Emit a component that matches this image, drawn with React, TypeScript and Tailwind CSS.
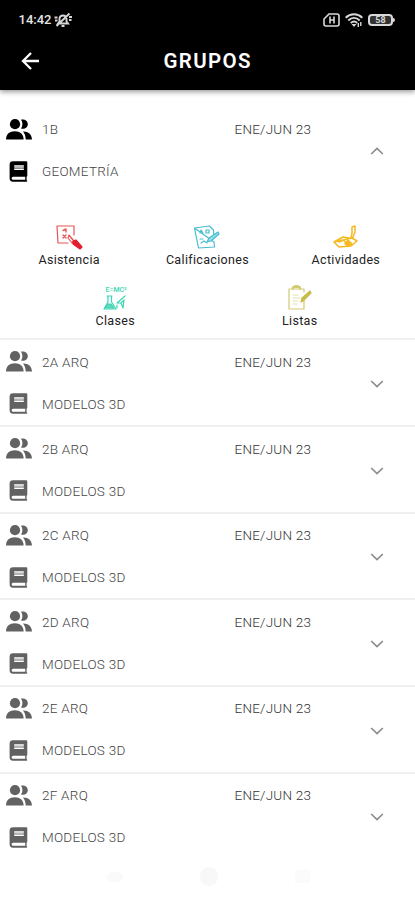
import React from "react";

function People() {
  return (
    <svg className="h-[21px] w-[26px]" viewBox="0 0 26 21" fill="currentColor">
      <circle cx="9" cy="5.2" r="5.1" />
      <path d="M15 .7c3.9-.7 6.8 1.5 6.8 4.6 0 3.2-3.1 5.3-6.8 4.2 1.9-2.6 1.9-6.2 0-8.8Z" />
      <path d="M0 20.4c0-5.4 3.6-8.2 8.8-8.2s8.8 2.8 8.8 8.2Z" />
      <path d="M17 12.4c5.3-.2 8.6 2.6 9 8h-6.3c-.1-3.2-.9-5.9-2.7-8Z" />
    </svg>
  );
}

function Book() {
  return (
    <svg className="ml-[3px] h-[21px] w-[19px]" viewBox="0 0 19 21">
      <path d="M4 .3h13.2q1.1 0 1.1 1.1v13.4q0 .7-.7 1v3.4q.7.2.7.8 0 .7-.9.7H4q-3.4 0-3.4-3.4V3.7Q.6.3 4 .3Z" fill="currentColor" />
      <path d="M5.2 5h9.6M5.2 8.3h9.6" stroke="#fff" strokeWidth="1.5" />
      <path d="M5.2 6.65h9.6" stroke="#bbb" strokeWidth="1.2" />
      <path d="M4.2 15.8h12v3h-12q-1.6 0-1.6-1.5t1.6-1.5Z" fill="#fff" />
    </svg>
  );
}

function Chevron({ up = false }: { up?: boolean }) {
  return (
    <svg className="h-2 w-[14px]" viewBox="0 0 14 8" fill="none" stroke="#8c8c8c" strokeWidth="1.7">
      <path d={up ? "M1.2 7 7 1.4 12.8 7" : "M1.2 1 7 6.6 12.8 1"} />
    </svg>
  );
}

function Group({ name, subject, open = false }: { name: string; subject: string; open?: boolean }) {
  return (
    <div className={`flex h-[86.65px] shrink-0 items-start ${open ? "pt-[11.5px] text-black" : "border-t-2 border-[#f0f0f0] pt-[10.4px] text-[#626262]"}`}>
      <div className="flex w-[234.5px] flex-col pl-[6px]">
        <div className="flex h-[22px] items-center">
          <People />
          <span className="ml-[10px] pt-px text-[13.5px] font-light leading-[21px] tracking-[0.25px] text-[#444]">{name}</span>
        </div>
        <div className="mt-[20px] flex h-[22px] items-center">
          <Book />
          <span className="ml-[14px] pt-px text-[13.5px] font-light leading-[21px] tracking-[0.27px] text-[#444]">{subject}</span>
        </div>
      </div>
      <div className="w-[135.5px] pt-px text-[13.5px] font-light leading-[21px] tracking-[0.22px] text-[#333]">ENE/JUN 23</div>
      <div className={open ? "mt-[29px]" : "mt-[29.2px]"}><Chevron up={open} /></div>
    </div>
  );
}

function Tool({ label, children }: { label: string; children: React.ReactNode }) {
  return (
    <div className="flex flex-1 flex-col items-center">
      <svg className="h-[26px] w-[28px]" viewBox="0 0 28 26" fill="none" strokeLinejoin="round" strokeLinecap="round">{children}</svg>
      <span className="mt-[2px] text-[12.5px] leading-[16px] tracking-[0.34px] text-[#222]">{label}</span>
    </div>
  );
}

const groups = ["2A ARQ", "2B ARQ", "2C ARQ", "2D ARQ", "2E ARQ", "2F ARQ"];

export default function App() {
  return (
    <div className="flex h-[900px] w-full flex-col overflow-hidden bg-white font-['Roboto','Liberation_Sans',sans-serif]">
      <header className="h-[90px] shrink-0 bg-black text-white shadow-[0_2px_5px_rgba(0,0,0,0.4)]">
        <div className="flex h-[40px] items-center pl-[18.5px] pr-[20px]">
          <span className="w-[34px] text-[13px] font-medium text-[#e5e5e5]">14:42</span>
          <svg className="h-4 w-[20px]" viewBox="0 0 20 16" fill="none" stroke="#d6d6d6" strokeWidth="1.9">
            <path d="M5 11.5h10l-1.5-2V6.5C13 2.5 7 2.5 6.5 6.5v3L5 11.5ZM8.5 14h3M3.5 14 16.5 1.5M1.5 5.5h3M2 8.5h2.5M16 5h3M16 8h2.5" />
          </svg>
          <div className="ml-auto flex items-center text-[#d8d8d8]">
            <svg className="h-[14px] w-[17px]" viewBox="0 0 17 14" fill="none" stroke="currentColor" strokeWidth="1.6">
              <path d="M6 1h8q2 0 2 2v8q0 2-2 2H3q-2 0-2-2V6L6 1Z" /><path d="M7 3.5v7M11 3.5v7M7 7h4" />
            </svg>
            <svg className="ml-[5px] h-[15px] w-[18px]" viewBox="0 0 18 15" fill="none" stroke="currentColor" strokeWidth="2">
              <path d="M.7 4.7C5.5.1 12.5.1 17.3 4.7M3.3 7.4c3.4-3.2 8-3.2 11.4 0M5.8 10c2-1.8 4.4-1.8 6.4 0" /><path d="m9 14-2.5-3h5Z" fill="currentColor" stroke="none" /><path d="M13.3 10v4M15.8 9v4" strokeWidth="1.4" />
            </svg>
            <div className="ml-[5px] flex h-[12.5px] w-[25px] items-center justify-center rounded-[4px] border-2 border-current bg-[#333] text-[9px] font-bold leading-none">58</div>
            <div className="h-[4px] w-[2px] rounded-r-sm bg-current" />
          </div>
        </div>
        <div className="flex h-[42px] items-center pl-[21px]">
          <svg className="h-[18px] w-[19px]" viewBox="0 0 19 18" fill="none" stroke="white" strokeWidth="2.3"><path d="M18 9H2M10 1 2 9l8 8" /></svg>
          <h1 className="ml-[123.5px] text-[20.5px] font-semibold leading-none tracking-[1.35px]">GRUPOS</h1>
        </div>
      </header>

      <main className="flex flex-col pt-[16.5px]">
        <Group name="1B" subject="GEOMETRÍA" open />
        <section className="flex h-[145.35px] flex-col pt-[31px]">
          <div className="flex">
            <Tool label="Asistencia">
              <g stroke="#ea5555" strokeWidth="1.2"><path d="M2 2h17v9M13 19H3L2 2" /><path d="M8 6.5 11 5v3M11 11l-3 3M8 11l3 3" strokeWidth="1.4" /><path d="m14 11 5 6-2 2-4-5ZM16 14l6 6" /><path d="m18 17 3-1 6 7-2 2-7-5Z" fill="#e21f30" stroke="#e21f30" /></g>
            </Tool>
            <Tool label="Calificaciones">
              <g stroke="#48bccf" strokeWidth="1.2"><path d="m1.5 4 15-2 4 4 .3 5M21 18l.5 5-16 1L1.5 4ZM7 9l1-3 2 3M13 6h3v3h-3ZM7 15h3M8 19l3-2 3 2" /><path d="m14 18 2-4 9-6 1 2-8 7Z" fill="#9bdde6" /></g>
            </Tool>
            <Tool label="Actividades">
              <g stroke="#f5b921" strokeWidth="1.5"><path d="m2 18 9-5 6 1M20 14l5 3-6 5-12 1-5-5ZM7 18l5-2 2 4h5" /><path d="m19 14 1-5V3l3-1v6l-2 5Z" /><path d="m13 20 3-4 4 4-4 2Z" fill="#f5b921" /></g>
            </Tool>
          </div>
          <div className="mt-[17px] flex px-[23px]">
            <Tool label="Clases">
              <text x="4.5" y="7" fill="#3dd5b2" fontSize="7" fontWeight="500" fontFamily="Roboto">E=MC²</text>
              <g stroke="#3dd5b2" strokeWidth="1.2"><path d="M6 11h5M7 11v6l-4 7h12l-4.5-7v-6" /><path d="m6 19-2 4h9l-3-4Z" fill="#62d7bd" /><path d="M24 11 16 18h4l2 5 1-8M20 18l3-3M16 20v3" /></g>
            </Tool>
            <Tool label="Listas">
              <g stroke="#d3cb73" strokeWidth="1.2"><path d="M18 13v11H3V4h15v3" /><path d="M7 4V2h7v2M9 1h3" strokeWidth="1.8" /><path d="M7 10h5M7 13h7M7 16h5M7 19h4" stroke="#e4dfaa" /><path d="m15 17 1-4 8-7 1 2-8 8Z" fill="#c8bd4c" stroke="#c8bd4c" /></g>
            </Tool>
          </div>
        </section>
        {groups.map((name) => <Group key={name} name={name} subject="MODELOS 3D" />)}
      </main>
      <nav className="mt-[9px] flex items-center justify-between pl-[107px] pr-[105px]">
        <div className="h-[10px] w-[16px] rounded-full bg-[#fafafa]" />
        <div className="h-[19px] w-[18px] rounded-full bg-[#f8f8f8]" />
        <div className="h-[13px] w-[15px] bg-[#fbfbfb]" />
      </nav>
    </div>
  );
}
